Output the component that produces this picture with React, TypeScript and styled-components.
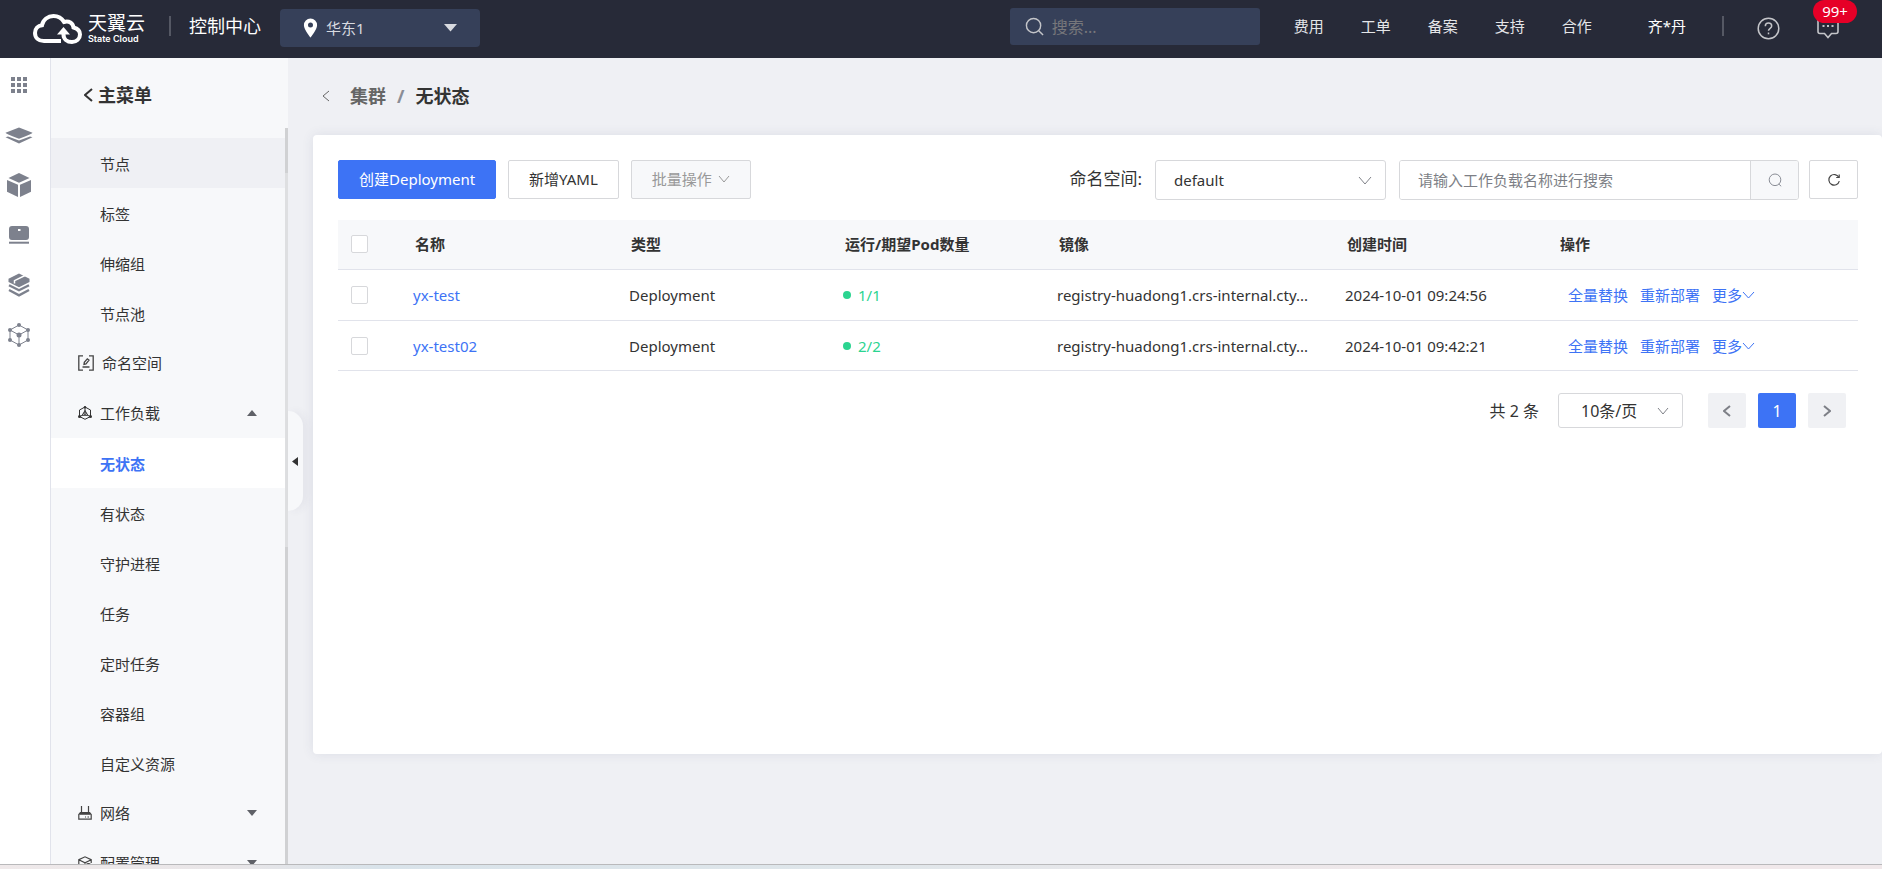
import React from 'react';
import styled, { createGlobalStyle, css } from 'styled-components';

const GlobalStyle = createGlobalStyle`
  *, *::before, *::after { box-sizing: border-box; }
  html, body, #root { height: 100%; }
  body {
    margin: 0;
    background: #eff0f4;
    color: #333;
    font-family: "Noto Sans", "Noto Sans CJK SC", sans-serif;
    font-size: 15px;
    line-height: 20px;
  }
  a { color: inherit; text-decoration: none; }
  button, input, select { font: inherit; color: inherit; }
  button { cursor: pointer; }
`;

const Page = styled.div`
  display: flex;
  flex-direction: column;
  height: 100vh;
  overflow: hidden;
`;

/* ---------- top bar ---------- */
const TopBar = styled.header`
  display: flex;
  align-items: center;
  flex: none;
  height: 58px;
  padding: 0 43px 0 32px;
  background: #272a38;
  color: #e4e5e8;
`;

const Logo = styled.a`
  display: flex;
  align-items: center;
  gap: 5px;
  margin-right: 24px;
  color: #fff;
`;

const LogoText = styled.span`
  display: flex;
  flex-direction: column;
  font-family: Roboto, "Noto Sans CJK SC", sans-serif;
`;

const LogoName = styled.span`
  font-size: 19px;
  line-height: 20px;
`;

const LogoSub = styled.span`
  font-family: Inter, sans-serif;
  font-size: 9px;
  line-height: 10px;
  font-weight: 600;
`;

const Rule = styled.span`
  width: 2px;
  height: 20px;
  margin-bottom: 6px;
  background: #555864;
`;

const ConsoleLink = styled.a`
  margin: 0 19px 6px 18px;
  color: #fff;
  font-size: 18px;
`;

const Region = styled.button`
  display: flex;
  align-items: center;
  gap: 8px;
  width: 200px;
  height: 38px;
  margin-bottom: 3px;
  padding: 0 23px;
  border: 0;
  border-radius: 4px;
  background: #364059;
  color: #d8dae0;
  svg:last-child { margin-left: auto; }
`;

const GlobalSearch = styled.label`
  display: flex;
  align-items: center;
  gap: 8px;
  width: 250px;
  height: 37px;
  margin: 0 34px 5px auto;
  padding: 0 15px;
  border-radius: 3px;
  background: #364059;
  color: #c4c5c9;
`;

const GlobalSearchInput = styled.input`
  flex: 1;
  min-width: 0;
  padding: 0;
  border: 0;
  outline: 0;
  background: none;
  font-size: 16px;
  &::placeholder { color: #77777b; opacity: 1; }
`;

const TopNav = styled.nav`
  display: flex;
  align-items: center;
  gap: 37px;
  margin-bottom: 6px;
`;

const UserLink = styled.a`
  margin: 0 36px 6px 56px;
  color: #fff;
`;

const IconButton = styled.button`
  display: flex;
  padding: 0;
  border: 0;
  background: none;
  color: #c4c5c9;
`;

const HelpButton = styled(IconButton)`
  margin: 0 37px 2px 33px;
`;

const MessageButton = styled(IconButton)`
  position: relative;
  margin-bottom: 4px;
`;

const Badge = styled.span`
  position: absolute;
  left: -4px;
  top: -16px;
  width: 44px;
  height: 23px;
  border-radius: 12px;
  background: #e60027;
  color: #fff;
  line-height: 23px;
  text-align: center;
`;

/* ---------- body ---------- */
const Body = styled.div`
  display: flex;
  flex: 1;
  min-height: 0;
`;

const Rail = styled.nav`
  display: flex;
  flex-direction: column;
  align-items: center;
  flex: none;
  width: 51px;
  padding: 2px 12px 0 0;
  border-right: 1px solid #e1e3eb;
  background: #fff;
  color: #7d818d;
`;

const RailLink = styled.a`
  display: flex;
  align-items: center;
  justify-content: center;
  width: 38px;
  height: 50px;
`;

const Sidebar = styled.aside`
  display: flex;
  flex-direction: column;
  position: relative;
  flex: none;
  width: 237px;
  background: #f7f8fa;
`;

const MenuTitle = styled.h2`
  display: flex;
  align-items: center;
  gap: 5px;
  flex: none;
  height: 70px;
  margin: 0;
  padding: 4px 0 0 33px;
  font-size: 18px;
  line-height: 24px;
`;

const MenuScroll = styled.div`
  display: flex;
  flex: 1;
  min-height: 0;
  overflow: hidden;
`;

const MenuList = styled.ul`
  flex: 1;
  margin: 10px 0 0;
  padding: 0;
  list-style: none;
`;

const menuRow = css`
  display: flex;
  align-items: center;
  width: 100%;
  height: 50px;
`;

const SubItem = styled.a<{ $state?: 'hover' | 'active' }>`
  ${menuRow}
  padding: 1px 0 0 49px;
  background: ${p => (p.$state === 'hover' ? '#eff0f4' : p.$state === 'active' ? '#fff' : 'none')};
  ${p => p.$state === 'active' && css`color: #3d73f5; font-weight: 700;`}
`;

const GroupItem = styled.button`
  ${menuRow}
  gap: 8px;
  padding: 0 28px 0 27px;
  border: 0;
  background: none;
  text-align: left;
  > svg:nth-of-type(2) { margin-left: auto; }
`;

const ScrollTrack = styled.div`
  display: flex;
  flex-direction: column;
  width: 3px;
  background: #dedfe1;
`;

const ScrollThumb = styled.div`
  height: 45px;
  background: #d0d1d3;
`;

const ScrollTail = styled.div`
  flex: 1;
  margin-top: 374px;
  background: #d0d1d3;
`;

const CollapseHandle = styled.button`
  display: flex;
  align-items: center;
  position: absolute;
  left: 100%;
  top: 353px;
  width: 15px;
  height: 100px;
  padding: 0 4px;
  border: 0;
  border-radius: 0 15px 15px 0;
  background: #f7f8fa;
  box-shadow: 4px 0 8px rgba(60, 70, 110, 0.06);
`;

const Main = styled.main`
  display: flex;
  flex-direction: column;
  flex: 1;
  min-width: 0;
  padding-left: 25px;
`;

const Breadcrumb = styled.nav`
  display: flex;
  align-items: center;
  flex: none;
  height: 77px;
  padding: 0 0 2px 9px;
  font-size: 18px;
  line-height: 24px;
  font-weight: 700;
  color: #666;
`;

const BackButton = styled(IconButton)`
  margin-right: 20px;
  color: #666;
`;

const Slash = styled.span`
  margin: 0 11px;
  color: #8a8d96;
`;

const Current = styled.span`
  color: #333;
`;

const Card = styled.section`
  flex: 1;
  margin-bottom: 110px;
  padding: 25px 24px 25px 25px;
  border-radius: 4px;
  background: #fff;
  box-shadow: 0 0 12px rgba(60, 70, 110, 0.1);
`;

const Toolbar = styled.div`
  display: flex;
  align-items: flex-start;
  gap: 12px;
  margin-bottom: 20px;
`;

const Button = styled.button<{ $primary?: boolean }>`
  display: flex;
  align-items: center;
  gap: 6px;
  height: 39px;
  padding: 0 20px 2px;
  border: 1px solid ${p => (p.$primary ? '#3d73f5' : '#d7d8db')};
  border-radius: 2px;
  background: ${p => (p.$primary ? '#3d73f5' : '#fff')};
  color: ${p => (p.$primary ? '#fff' : '#333')};
  white-space: nowrap;
  &:disabled { background: #f7f8fa; color: #999; cursor: default; }
`;

const RefreshButton = styled(Button)`
  justify-content: center;
  width: 49px;
  padding: 0;
`;

const Filters = styled.div`
  display: flex;
  margin-left: auto;
`;

const FilterLabel = styled.label`
  margin-right: 13px;
  font-size: 17px;
  line-height: 38px;
`;

const SelectBox = styled.div<{ $width: number; $height: number }>`
  display: flex;
  align-items: center;
  width: ${p => p.$width}px;
  height: ${p => p.$height}px;
  border: 1px solid #d7d8db;
  border-radius: 3px;
  background: #fff;
  color: #808289;
  > svg { flex: none; margin-right: 13px; pointer-events: none; }
`;

const Select = styled.select<{ $pad: number }>`
  appearance: none;
  flex: 1;
  min-width: 0;
  height: 100%;
  padding: 0 0 0 ${p => p.$pad}px;
  border: 0;
  outline: 0;
  background: none;
  color: #333;
`;

const SearchGroup = styled.div`
  display: flex;
  width: 400px;
  height: 40px;
  margin: 0 10px 0 13px;
  border: 1px solid #d7d8db;
  border-radius: 3px;
  overflow: hidden;
`;

const SearchInput = styled.input`
  flex: 1;
  min-width: 0;
  padding: 0 18px;
  border: 0;
  outline: 0;
  &::placeholder { color: #7d7f86; opacity: 1; }
`;

const SearchButton = styled.button`
  display: flex;
  align-items: center;
  justify-content: center;
  width: 48px;
  padding: 0;
  border: 0;
  border-left: 1px solid #d7d8db;
  background: #f7f8fa;
  color: #8a8d96;
`;

const Table = styled.table`
  width: 100%;
  table-layout: fixed;
  border-collapse: separate;
  border-spacing: 0;
`;

const Th = styled.th`
  height: 50px;
  padding: 0 15px 2px;
  border-bottom: 1px solid #e1e3eb;
  background: #f7f8fa;
  text-align: left;
  font-weight: 700;
  &:first-child { padding-left: 13px; }
`;

const Td = styled.td`
  height: 50px;
  padding: 0 13px;
  border-bottom: 1px solid #e1e3eb;
  overflow: hidden;
  white-space: nowrap;
  text-overflow: ellipsis;
  tr:first-child > & { height: 51px; }
`;

const Checkbox = styled.input`
  appearance: none;
  display: block;
  width: 17px;
  height: 18px;
  margin: 0;
  border: 1px solid #d7d8db;
  border-radius: 2px;
  background: #fff;
`;

const NameLink = styled.a`
  color: #3d73f5;
`;

const Pods = styled.span`
  display: flex;
  align-items: center;
  gap: 7px;
  color: #2bd490;
  &::before {
    content: '';
    width: 8px;
    height: 8px;
    border-radius: 50%;
    background: #2bd490;
  }
`;

const Actions = styled.div`
  display: flex;
  align-items: center;
  gap: 12px;
  padding-left: 10px;
`;

const ActionButton = styled.button`
  display: flex;
  align-items: center;
  padding: 0;
  border: 0;
  background: none;
  color: #3d73f5;
`;

const Pager = styled.nav`
  display: flex;
  align-items: center;
  justify-content: flex-end;
  gap: 12px;
  padding: 22px 12px 0 0;
  font-size: 16px;
`;

const PagerSize = styled.div`
  margin: 0 13px 0 7px;
`;

const PageButton = styled.button<{ $current?: boolean }>`
  display: flex;
  align-items: center;
  justify-content: center;
  width: 38px;
  height: 35px;
  padding: 0;
  border: 0;
  border-radius: 2px;
  background: ${p => (p.$current ? '#3d73f5' : '#f0f1f4')};
  color: ${p => (p.$current ? '#fff' : '#7d7f86')};
`;

const BottomEdge = styled.footer`
  flex: none;
  height: 5px;
  border-top: 1px solid #b9b9bb;
  background: linear-gradient(90deg, #efe9ea 0, #e9e6e8 12%, #d9e3ea 20%, #dfe6ea 45%, #f0e8ea 75%, #f0e8ea 100%);
`;

/* ---------- icons ---------- */
const Chevron = ({ dir, w, h, stroke = 1 }: { dir: 'left' | 'right' | 'down'; w: number; h: number; stroke?: number }) => {
  const d =
    dir === 'down' ? `M1 1L${w / 2} ${h - 1}L${w - 1} 1` : dir === 'left' ? `M${w - 1} 1L1 ${h / 2}L${w - 1} ${h - 1}` : `M1 1L${w - 1} ${h / 2}L1 ${h - 1}`;
  return (
    <svg width={w} height={h} fill="none" stroke="currentColor" strokeWidth={stroke} aria-hidden="true">
      <path d={d} />
    </svg>
  );
};

const Caret = ({ up }: { up?: boolean }) => (
  <svg width="10" height="6" fill="#5f6167" aria-hidden="true">
    <path d={up ? 'M0 6L5 0L10 6Z' : 'M0 0L5 6L10 0Z'} />
  </svg>
);

const CloudMark = () => (
  <svg width="51" height="32" viewBox="0 0 51 32" fill="none" aria-hidden="true">
    <path
      d="M29 28H12C6.500 28 3 24.500 3 20C3 15.800 6 12.700 10 12.200C11 6.500 16 3 21.500 3C26.500 3 30 5.600 32 9C37 7.600 41 10 41.500 14.500C45.500 15.500 48 18 48 21.500C48 25.800 44.500 29 40 29C35 29 31.500 26 31.500 21.500V19"
      stroke="#fff"
      strokeWidth="4"
    />
    <path d="M25 21.500L31.500 14L38 21.500Z" fill="#fff" />
  </svg>
);

const PinIcon = () => (
  <svg width="15" height="20" viewBox="0 0 15 20" aria-hidden="true">
    <path fillRule="evenodd" fill="#fff" d="M7.500 0.500A6.600 6.600 0 0 0 0.900 7.200C0.900 11.500 7.500 19.500 7.500 19.500S14.100 11.500 14.100 7.200A6.600 6.600 0 0 0 7.500 0.500ZM7.500 4.500A2.500 2.500 0 1 1 7.500 9.500A2.500 2.500 0 1 1 7.500 4.500Z" />
  </svg>
);

const SearchIcon = ({ size, stroke = 1.5 }: { size: number; stroke?: number }) => (
  <svg width={size} height={size} viewBox="0 0 20 20" fill="none" stroke="currentColor" strokeWidth={stroke} aria-hidden="true">
    <circle cx="9" cy="9" r="7.500" />
    <path d="M14.500 14.500L19 19" />
  </svg>
);

const SmallSearchIcon = () => (
  <svg width="14" height="14" viewBox="0 0 14 14" fill="none" stroke="currentColor" aria-hidden="true">
    <circle cx="7" cy="6.800" r="5.800" />
    <path d="M10.800 11L13.200 13.300" />
  </svg>
);

const HelpIcon = () => (
  <svg width="23" height="23" viewBox="0 0 23 23" fill="none" stroke="currentColor" strokeWidth="1.500" aria-hidden="true">
    <circle cx="11.500" cy="11.500" r="10.300" />
    <path d="M8.300 9.200C8.300 7.200 9.700 6 11.500 6S14.700 7.200 14.700 9C14.700 11.300 11.500 11.300 11.500 13.800" />
    <path d="M11.500 15.500V17.300" />
  </svg>
);

const MessageIcon = () => (
  <svg width="22" height="23" viewBox="0 0 22 23" fill="none" stroke="currentColor" strokeWidth="1.600" aria-hidden="true">
    <path d="M1 2V15.500Q1 17.500 3 17.500H7.500L11 21.500L14.500 17.500H19Q21 17.500 21 15.500V2Q21 1 19 1H3Q1 1 1 2Z" />
    <path d="M5.500 10H7.500M10 10H12M14.500 10H16.500" strokeWidth="2.200" />
  </svg>
);

const RefreshIcon = () => (
  <svg width="14" height="14" viewBox="0 0 14 14" fill="none" stroke="#444" strokeWidth="1.200" aria-hidden="true">
    <path d="M11.800 4.200A5.300 5.300 0 1 0 12.300 8.200" />
    <path d="M12.200 1.500V4.500H9.200" />
  </svg>
);

const GridIcon = () => (
  <svg width="16" height="16" fill="currentColor" aria-hidden="true">
    {[0, 6, 12].map(y => [0, 6, 12].map(x => <rect key={`${x}-${y}`} x={x} y={y} width="4" height="4" />))}
  </svg>
);

const LayersIcon = () => (
  <svg width="28" height="17" viewBox="0 0 28 17" fill="currentColor" aria-hidden="true">
    <path d="M14 0.500L27.500 5.800Q27.500 6.600 14 11.800Q0.500 6.600 0.500 5.800Z" />
    <path d="M0.500 10.200L3 9.500L14 13.600L25 9.500L27.500 10.200L14 16.500Z" />
  </svg>
);

const CubeIcon = () => (
  <svg width="24" height="24" viewBox="0 0 24 24" fill="currentColor" aria-hidden="true">
    <path d="M12 0L22.500 5L12 9.800L1.500 5Z" />
    <path d="M0 7L11 11.800V24L0 18.800Z" />
    <path d="M24 7L13 11.800V24L24 18.800Z" />
  </svg>
);

const ServerIcon = () => (
  <svg width="20" height="18" viewBox="0 0 20 18" fill="currentColor" aria-hidden="true">
    <path fillRule="evenodd" d="M3 0H17Q20 0 20 3V11Q20 14 17 14H3Q0 14 0 11V3Q0 0 3 0ZM9 3V5H11.500V3Z" />
    <rect y="15.700" width="20" height="2" />
  </svg>
);

const StackIcon = () => (
  <svg width="22" height="24" viewBox="0 0 22 24" aria-hidden="true">
    <path d="M11 0.500L21.500 5.800V9L11 14.200L0.500 9V5.800Z" fill="currentColor" />
    <path d="M17 2.500L6.500 7.600V10.500" fill="none" stroke="#fff" strokeWidth="1.500" />
    <path d="M1 12.200L11 17.200L21 12.200M1 17L11 22.300L21 17" fill="none" stroke="currentColor" strokeWidth="2.400" />
  </svg>
);

const NodesIcon = () => (
  <svg width="22" height="24" viewBox="0 0 22 24" fill="none" stroke="currentColor" aria-hidden="true">
    <path d="M11 2L20 7V17L11 22L2 17V7ZM2 7L11 12L20 7M11 12V22" />
    <g fill="currentColor" stroke="none">
      <circle cx="11" cy="2" r="2" />
      <circle cx="20" cy="7" r="2" />
      <circle cx="20" cy="17" r="2" />
      <circle cx="11" cy="22" r="2" />
      <circle cx="2" cy="17" r="2" />
      <circle cx="2" cy="7" r="2" />
      <circle cx="11" cy="12" r="2.500" />
    </g>
  </svg>
);

const NamespaceIcon = () => (
  <svg width="16" height="16" viewBox="0 0 16 16" fill="none" stroke="#444" strokeWidth="1.300" aria-hidden="true">
    <path d="M5 0.800H0.800V15.200H5M11 0.800H15.200V15.200H11M4.500 12H11.500" />
    <path d="M6 9.300L6.300 7.300L9.300 3.800L11 5.200L8 8.800Z" />
  </svg>
);

const WorkloadIcon = () => (
  <svg width="14" height="14" viewBox="0 0 14 14" fill="none" stroke="#333" aria-hidden="true">
    <path d="M7 1L12.500 4V10.500L7 13.300L1.500 10.500V4ZM7 1V5M4.500 9.300L1.500 10.500M9.500 9.300L12.500 10.500" />
    <path d="M7 4.500L9.800 9.300H4.200Z" />
    <circle cx="7" cy="7.500" r="1" />
    <g fill="#333" stroke="none">
      <circle cx="7" cy="1.200" r="1.200" />
      <circle cx="1.500" cy="10.500" r="1.500" />
      <circle cx="12.500" cy="10.500" r="1.500" />
    </g>
  </svg>
);

const NetworkIcon = () => (
  <svg width="14" height="14" viewBox="0 0 14 14" fill="none" stroke="#444" strokeWidth="1.200" aria-hidden="true">
    <path d="M3.500 0V6M10.500 0V6M2.500 6.500H11.500L13.200 8.500V13.200H0.800V8.500ZM7 11H8M9.500 11H11" />
    <path d="M1.500 7.800H12.500" strokeWidth="2" />
  </svg>
);

const ConfigIcon = () => (
  <svg width="14" height="14" viewBox="0 0 14 14" fill="none" stroke="#444" strokeWidth="1.200" aria-hidden="true">
    <path d="M6 13L0.800 10.200V3.600L7 0.800L13.200 3.600V7M0.800 3.800L7 6.800L13.200 3.800M7 6.800V9" />
    <circle cx="10.300" cy="10.500" r="2.800" />
    <circle cx="10.300" cy="10.500" r="0.600" />
  </svg>
);

/* ---------- data ---------- */
const rows = [
  { name: 'yx-test', pods: '1/1', time: '2024-10-01 09:24:56' },
  { name: 'yx-test02', pods: '2/2', time: '2024-10-01 09:42:21' },
];
const columns = ['名称', '类型', '运行/期望Pod数量', '镜像', '创建时间', '操作'];
const columnWidths = [62, 216, 214, 214, 288, 213, 313];
const rail = [
  { label: '全部产品', icon: <GridIcon /> },
  { label: '云主机', icon: <LayersIcon /> },
  { label: '容器', icon: <CubeIcon /> },
  { label: '物理机', icon: <ServerIcon /> },
  { label: '存储', icon: <StackIcon /> },
  { label: '云网络', icon: <NodesIcon /> },
];

type Entry = { text: string; icon?: React.ReactNode; arrow?: 'up' | 'down'; state?: 'hover' | 'active' };
const menu: Entry[] = [
  { text: '节点', state: 'hover' },
  { text: '标签' },
  { text: '伸缩组' },
  { text: '节点池' },
  { text: '命名空间', icon: <NamespaceIcon /> },
  { text: '工作负载', icon: <WorkloadIcon />, arrow: 'up' },
  { text: '无状态', state: 'active' },
  { text: '有状态' },
  { text: '守护进程' },
  { text: '任务' },
  { text: '定时任务' },
  { text: '容器组' },
  { text: '自定义资源' },
  { text: '网络', icon: <NetworkIcon />, arrow: 'down' },
  { text: '配置管理', icon: <ConfigIcon />, arrow: 'down' },
];

export default function App() {
  return (
    <Page>
      <GlobalStyle />
      <TopBar>
        <Logo href="#">
          <CloudMark />
          <LogoText>
            <LogoName>天翼云</LogoName>
            <LogoSub>State Cloud</LogoSub>
          </LogoText>
        </Logo>
        <Rule />
        <ConsoleLink href="#">控制中心</ConsoleLink>
        <Region type="button">
          <PinIcon />
          华东1
          <svg width="13" height="8" fill="#d8dae0" aria-hidden="true">
            <path d="M0 0H13L6.500 7.500Z" />
          </svg>
        </Region>
        <GlobalSearch>
          <SearchIcon size={19} />
          <GlobalSearchInput type="text" placeholder="搜索..." aria-label="搜索" />
        </GlobalSearch>
        <TopNav>
          {['费用', '工单', '备案', '支持', '合作'].map(t => (
            <a key={t} href="#">{t}</a>
          ))}
        </TopNav>
        <UserLink href="#">齐*丹</UserLink>
        <Rule />
        <HelpButton type="button" aria-label="帮助">
          <HelpIcon />
        </HelpButton>
        <MessageButton type="button" aria-label="消息">
          <MessageIcon />
          <Badge>99+</Badge>
        </MessageButton>
      </TopBar>
      <Body>
        <Rail>
          {rail.map(r => (
            <RailLink key={r.label} href="#" aria-label={r.label}>{r.icon}</RailLink>
          ))}
        </Rail>
        <Sidebar>
          <MenuTitle>
            <Chevron dir="left" w={9} h={14} stroke={2} />
            主菜单
          </MenuTitle>
          <MenuScroll>
            <MenuList>
              {menu.map(m => (
                <li key={m.text}>
                  {m.icon ? (
                    <GroupItem type="button">
                      {m.icon}
                      {m.text}
                      {m.arrow && <Caret up={m.arrow === 'up'} />}
                    </GroupItem>
                  ) : (
                    <SubItem href="#" $state={m.state}>{m.text}</SubItem>
                  )}
                </li>
              ))}
            </MenuList>
            <ScrollTrack>
              <ScrollThumb />
              <ScrollTail />
            </ScrollTrack>
          </MenuScroll>
          <CollapseHandle type="button" aria-label="收起菜单">
            <svg width="6" height="9" fill="#333" aria-hidden="true">
              <path d="M6 0V9L0 4.500Z" />
            </svg>
          </CollapseHandle>
        </Sidebar>
        <Main>
          <Breadcrumb>
            <BackButton type="button" aria-label="返回">
              <Chevron dir="left" w={8} h={12} />
            </BackButton>
            <a href="#">集群</a>
            <Slash>/</Slash>
            <Current>无状态</Current>
          </Breadcrumb>
          <Card>
            <Toolbar>
              <Button type="button" $primary>创建Deployment</Button>
              <Button type="button">新增YAML</Button>
              <Button type="button" disabled>
                批量操作
                <Chevron dir="down" w={12} h={8} />
              </Button>
              <Filters>
                <FilterLabel htmlFor="namespace">命名空间:</FilterLabel>
                <SelectBox $width={231} $height={40}>
                  <Select id="namespace" $pad={18} defaultValue="default">
                    <option>default</option>
                  </Select>
                  <Chevron dir="down" w={14} h={9} />
                </SelectBox>
                <SearchGroup>
                  <SearchInput type="text" placeholder="请输入工作负载名称进行搜索" aria-label="工作负载名称" />
                  <SearchButton type="button" aria-label="搜索">
                    <SmallSearchIcon />
                  </SearchButton>
                </SearchGroup>
                <RefreshButton type="button" aria-label="刷新">
                  <RefreshIcon />
                </RefreshButton>
              </Filters>
            </Toolbar>
            <Table>
              <colgroup>
                {columnWidths.map((w, i) => (
                  <col key={i} width={w} />
                ))}
              </colgroup>
              <thead>
                <tr>
                  <Th>
                    <Checkbox type="checkbox" aria-label="全选" />
                  </Th>
                  {columns.map(c => (
                    <Th key={c} scope="col">{c}</Th>
                  ))}
                </tr>
              </thead>
              <tbody>
                {rows.map(r => (
                  <tr key={r.name}>
                    <Td>
                      <Checkbox type="checkbox" aria-label={r.name} />
                    </Td>
                    <Td>
                      <NameLink href="#">{r.name}</NameLink>
                    </Td>
                    <Td>Deployment</Td>
                    <Td>
                      <Pods>{r.pods}</Pods>
                    </Td>
                    <Td>registry-huadong1.crs-internal.cty...</Td>
                    <Td>{r.time}</Td>
                    <Td>
                      <Actions>
                        <ActionButton type="button">全量替换</ActionButton>
                        <ActionButton type="button">重新部署</ActionButton>
                        <ActionButton type="button">
                          更多
                          <Chevron dir="down" w={13} h={8} />
                        </ActionButton>
                      </Actions>
                    </Td>
                  </tr>
                ))}
              </tbody>
            </Table>
            <Pager aria-label="分页">
              <span>共 2 条</span>
              <PagerSize>
                <SelectBox $width={125} $height={35}>
                  <Select aria-label="每页条数" $pad={22} defaultValue="10条/页">
                    <option>10条/页</option>
                  </Select>
                  <Chevron dir="down" w={12} h={8} />
                </SelectBox>
              </PagerSize>
              <PageButton type="button" aria-label="上一页">
                <Chevron dir="left" w={8} h={12} stroke={2} />
              </PageButton>
              <PageButton type="button" $current>1</PageButton>
              <PageButton type="button" aria-label="下一页">
                <Chevron dir="right" w={8} h={12} stroke={2} />
              </PageButton>
            </Pager>
          </Card>
        </Main>
      </Body>
      <BottomEdge />
    </Page>
  );
}
